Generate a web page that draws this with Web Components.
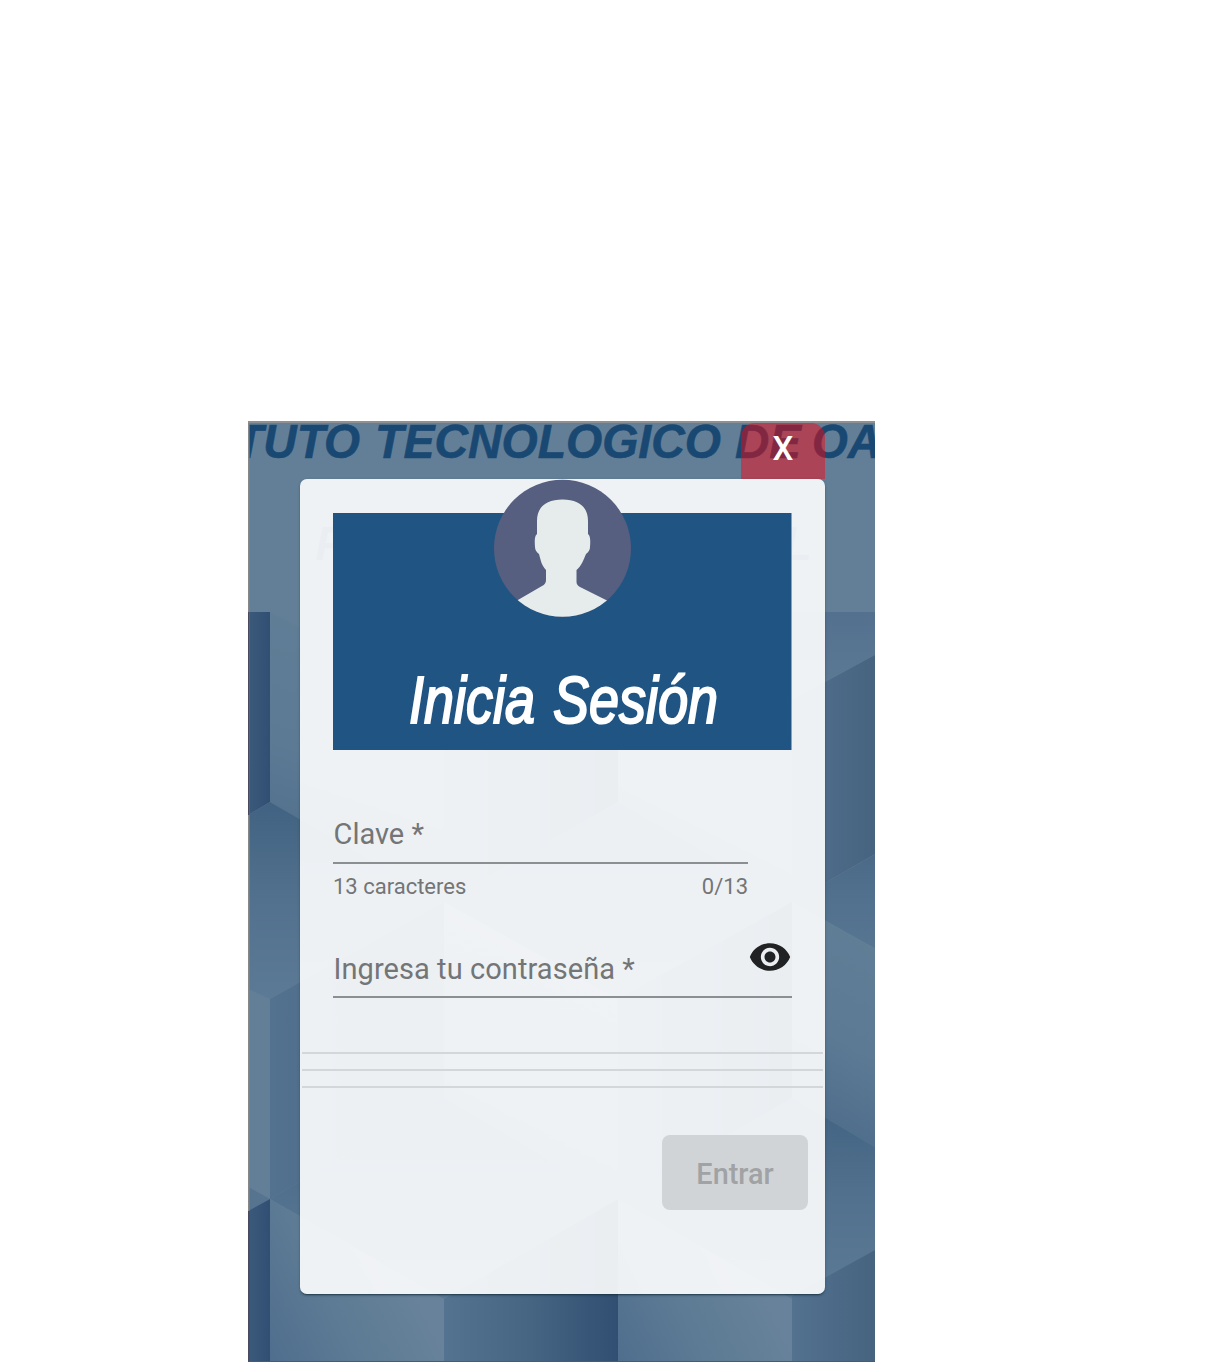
<!DOCTYPE html>
<html lang="es">
<head>
<meta charset="utf-8">
<title>Inicia Sesión</title>
<style>
body{margin:0;background:#fff;font-family:Roboto,"Liberation Sans",sans-serif}
</style>
</head>
<body>
<login-page></login-page>
<script>
const define = (name, html) => customElements.define(name, class extends HTMLElement {
  constructor(){
    super();
    const t = document.createElement('template');
    t.innerHTML = html;
    this.attachShadow({mode:'open'}).append(t.content.cloneNode(true));
    this.shadowRoot.querySelectorAll('[data-attr]').forEach(e => e.textContent = this.getAttribute(e.dataset.attr) || '');
  }
});

define('cube-backdrop', `
<style>:host{display:block}svg{display:block;width:100%;height:100%}text{font:italic bold 47.5px "Liberation Sans",Arial,sans-serif}</style>
<svg viewBox="248 421 627 941" preserveAspectRatio="none">
 <defs>
  <linearGradient id="top" x1="0" y1="0" x2="0" y2="1"><stop stop-color="#416282"/><stop offset=".5" stop-color="#52718e"/><stop offset="1" stop-color="#5c7a95"/></linearGradient>
  <linearGradient id="light" x1=".6" y1="0" x2=".3" y2="1"><stop stop-color="#65819a"/><stop offset=".5" stop-color="#607e97"/><stop offset="1" stop-color="#4d6d8b"/></linearGradient>
  <linearGradient id="dark"><stop stop-color="#537390"/><stop offset=".5" stop-color="#466583"/><stop offset="1" stop-color="#304f72"/></linearGradient>
  <linearGradient id="edge"><stop stop-color="#3b5a7b"/><stop offset="1" stop-color="#304f72"/></linearGradient>
  <linearGradient id="right"><stop stop-color="#537290"/><stop offset="1" stop-color="#46637f"/></linearGradient>
  <linearGradient id="floor" gradientUnits="objectBoundingBox" x1="0" y1="1" x2=".85" y2=".6"><stop stop-color="#4f6e8e"/><stop offset=".5" stop-color="#5d7b94"/><stop offset="1" stop-color="#67829a"/></linearGradient>
  <linearGradient id="fall" x1=".4" y1="0" x2=".2" y2="1"><stop stop-color="#617e97"/><stop offset=".5" stop-color="#5c7a94"/><stop offset="1" stop-color="#4b6a89"/></linearGradient>
  <linearGradient id="sky" x1="0" y1="0" x2="0" y2="1"><stop stop-color="#53718f"/><stop offset="1" stop-color="#5d7b94"/></linearGradient>
 </defs>
 <path fill="#627f97" d="M248 421H875V1362H248z"/>
 <path fill="url(#edge)" d="M248 612H270V802L248 815z"/>
 <path fill="url(#fall)" d="M270 612L444 702V902L270 802z"/>
 <path fill="url(#dark)" d="M444 702L618 612V802L444 902z"/>
 <path fill="url(#light)" d="M618 612L792 702V902L618 802z"/>
 <path fill="url(#sky)" d="M618 612H875V655L792 700z"/>
 <path fill="url(#right)" d="M792 700L875 655V854L792 902z"/>
 <path fill="url(#top)" d="M270 802L444 902L270 999L248 989V815z"/>
 <path fill="url(#top)" d="M618 802L792 902L618 999L444 902z"/>
 <path fill="url(#top)" d="M792 902L966 802V999z"/>
 <path fill="#627f97" d="M248 989L270 999V1199L248 1187z"/>
 <path fill="url(#right)" d="M270 999L444 902V1098L270 1199z"/>
 <path fill="url(#light)" d="M444 902L618 999V1199L444 1098z"/>
 <path fill="url(#dark)" d="M618 999L792 902V1098L618 1199z"/>
 <path fill="url(#fall)" d="M792 902L875 949V1147L792 1098z"/>
 <path fill="#56738f" d="M248 1187L270 1199L248 1211z"/>
 <path fill="url(#top)" d="M444 1098L618 1199L444 1299L270 1199z"/>
 <path fill="url(#top)" d="M792 1098L875 1147V1250L792 1299L618 1199z"/>
 <path fill="url(#edge)" d="M248 1211L270 1199V1362H248z"/>
 <path fill="url(#floor)" d="M270 1199L444 1299V1362H270z"/>
 <path fill="url(#dark)" d="M444 1299L618 1199V1362H444z"/>
 <path fill="url(#floor)" d="M618 1199L792 1299V1362H618z"/>
 <path fill="url(#right)" d="M792 1296L875 1250V1362H792z"/>
 <g fill="#194872" stroke="#194872" stroke-width=".6"><text x="235" y="458" textLength="125" lengthAdjust="spacingAndGlyphs">TUTO</text><text x="375" y="458" textLength="346" lengthAdjust="spacingAndGlyphs">TECNOLOGICO</text><text x="735" y="458" textLength="66" lengthAdjust="spacingAndGlyphs">DE</text><text x="812" y="458" textLength="69" lengthAdjust="spacingAndGlyphs">OA</text></g>
 <g fill="#194872" opacity=".7"><text x="315" y="560">P</text><text x="783" y="560">L</text></g>
 <path fill="#8f9092" d="M248 421H875V423H248z"/>
 <path fill="#858788" d="M248 423H249.6V1211H248z"/>
 <path fill="#4a4960" d="M248 612H249.4V815H248zM248 1211H249.4V1362H248z"/>
 <path fill="#5c5363" d="M248 1361H875V1362H248z"/>
</svg>`);

define('close-button', `
<style>:host{display:block;width:84px;height:56px}button{width:100%;height:100%;padding:0 0 4px;border:0;border-radius:14px 14px 0 0;background:rgba(255,0,10,.46);color:#fff;font:500 33px/50px Roboto,sans-serif}</style>
<button aria-label="Cerrar"><slot></slot></button>`);

define('login-banner', `
<style>:host{display:block}svg{display:block;overflow:visible}text{font:italic 400 66px "Liberation Sans Narrow","Liberation Sans",sans-serif}</style>
<svg width="458" height="237" viewBox="333 513 458 237">
 <path fill="#205583" d="M333 513H791.5V750H333z"/>
 <clipPath id="round"><circle cx="562.5" cy="548.3" r="68.5"/></clipPath>
 <circle cx="562.5" cy="548.3" r="68.5" fill="#565f80"/>
 <path clip-path="url(#round)" fill="#e6ecec" d="M562.5 499.5C579 499.5 588 507 588 521V534C590.500 536 590.500 541 590 547Q590 551 586 554C583 561 582 565 576.500 570V582Q576.500 585 580 587L614 604V622H511V604L542 586Q546 584 546 580V570C541 564 541 561 539 554Q535 551 535 547C534.500 541 534.500 536 537 534V521C537 507 546 499.500 562.500 499.500Z"/>
 <text x="409" y="722.5" textLength="126" lengthAdjust="spacingAndGlyphs" fill="#fff" stroke="#fff" stroke-width="2.1">Inicia</text>
 <text x="553" y="722.5" textLength="165" lengthAdjust="spacingAndGlyphs" fill="#fff" stroke="#fff" stroke-width="2.1">Sesión</text>
</svg>`);

define('text-field', `
<style>
:host{display:block;color:#737577}
.line{display:flex;justify-content:space-between;align-items:flex-start;height:52px;border-bottom:2px solid #8c8f91}
label{font-size:29px;line-height:34px;padding:var(--drop,7px) 0 0 .5px;letter-spacing:var(--track,0);white-space:nowrap}
.hints{display:flex;justify-content:space-between;font-size:22px;line-height:26px;padding-top:10px;letter-spacing:0}
</style>
<div class="line"><label data-attr="label"></label><slot></slot></div>
<div class="hints"><span data-attr="hint"></span><span data-attr="count"></span></div>`);

define('eye-icon', `
<style>:host{display:block}svg{display:block}</style>
<svg width="44" height="44" viewBox="0 0 24 24"><path fill="#202223" d="M12 4.5C7 4.5 2.730 7.610 1 12c1.730 4.390 6 7.500 11 7.500s9.270-3.110 11-7.500c-1.730-4.390-6-7.500-11-7.500zM12 17c-2.760 0-5-2.240-5-5s2.240-5 5-5 5 2.240 5 5-2.240 5-5 5zm0-8c-1.660 0-3 1.340-3 3s1.340 3 3 3 3-1.340 3-3-1.340-3-3-3z"/></svg>`);

define('rule-lines', `
<style>:host{display:flex;flex-direction:column;gap:15px}i{height:2px;background:#d3d7d9}</style><i></i><i></i><i></i>`);

define('submit-button', `
<style>:host{display:block;width:146px;height:75px}button{width:100%;height:100%;border:0;padding:2px 0 0;border-radius:8px;background:#d1d4d7;color:#a0a2a4;font:500 28.800px/34px Roboto,sans-serif}</style>
<button disabled><slot></slot></button>`);

define('login-card', `
<style>
:host{display:flex;flex-direction:column;box-sizing:border-box;width:525px;height:815px;border-radius:7px;background:rgba(255,255,255,.9);box-shadow:0 2px 2px -1px rgba(20,45,60,.75),0 1px 3px rgba(30,50,70,.3)}
login-banner{margin:34px 33px 0}
.key{margin:60px 77px 0 33px;height:90px}
.pass{margin:44px 33px 0;height:57px;--track:.07px;--drop:8px}
eye-icon{width:44px;height:44px;margin:-9px 0 0}
rule-lines{margin:51px 2px 0}
submit-button{align-self:flex-end;margin:47px 17px 0 0}
</style>
<login-banner></login-banner>
<text-field class="key" label="Clave *" hint="13 caracteres" count="0/13"></text-field>
<text-field class="pass" label="Ingresa tu contraseña *"><eye-icon></eye-icon></text-field>
<rule-lines></rule-lines>
<submit-button>Entrar</submit-button>`);

define('login-page', `
<style>
:host{display:block;box-sizing:border-box;width:1210px;height:1362px;padding:421px 0 0 248px;overflow:hidden}
.stage{display:grid;width:627px;height:941px;overflow:hidden}
.stage>*{grid-area:1/1;min-width:0}
.dialog{display:flex;flex-direction:column;width:525px;margin:2px 0 0 52px}
close-button{align-self:flex-end}
</style>
<div class="stage"><cube-backdrop></cube-backdrop><div class="dialog"><close-button>X</close-button><login-card></login-card></div></div>`);
</script>
</body>
</html>
